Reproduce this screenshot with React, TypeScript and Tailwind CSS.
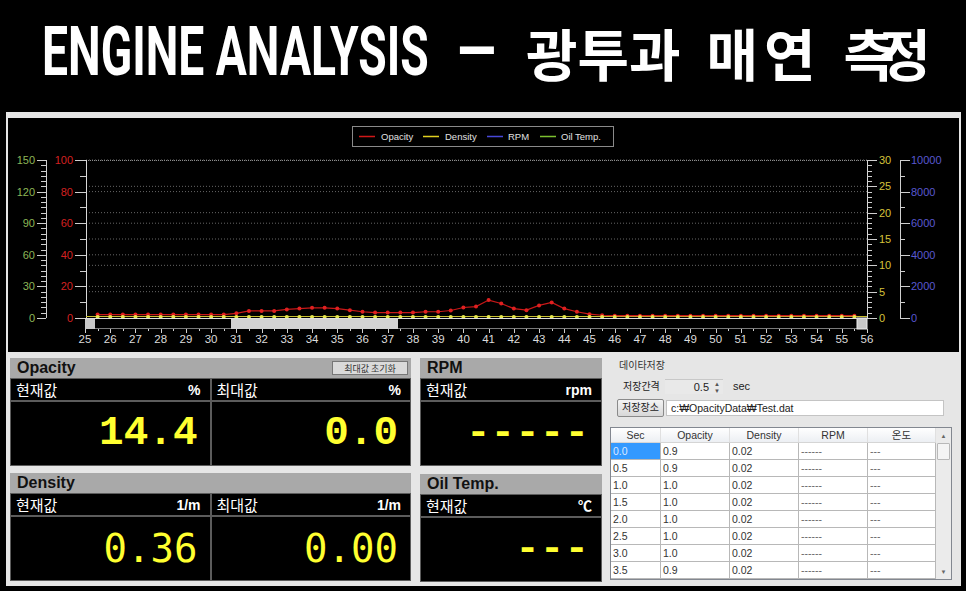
import React from 'react';

const X0 = 85;
const XS = (867 - 85) / 31;
const Y0 = 318;
const YH = 158;
const tx = (t: number) => X0 + (t - 25) * XS;

// opacity samples every 0.5 sec, starting at 25.5
const opacity = [
  1.2, 1.2, 1.2, 1.2, 1.2, 1.2, 1.2, 1.2, 1.2, 1.2, 1.2,
  2, 3.5, 3.5, 3.5, 4.5, 5, 5.5, 5.5, 5, 4, 3, 2.5, 2.5, 2.5, 2.5, 3, 3, 3.8,
  5.7, 6.3, 10.4, 8.2, 5, 4, 7, 8.9, 5, 3, 1.5, 0.8,
  0.5, 0.5, 0.5, 0.5, 0.5, 0.5, 0.5, 0.5, 0.5, 0.5, 0.5, 0.5, 0.5, 0.5, 0.5, 0.5, 0.5, 0.5, 0.5, 0.5,
];

const range = (a: number, b: number, s: number) => {
  const out: number[] = [];
  for (let v = a; v <= b + 1e-9; v += s) out.push(v);
  return out;
};

function Chart() {
  const pts = opacity.map((v, i) => [tx(25.5 + i * 0.5), Y0 - 1.5 - (v / 100) * YH]);
  const line = pts.map((p) => p.join(',')).join(' ');
  const grid = [
    ...range(20, 100, 20).map((v) => Y0 - (v / 100) * YH),
    ...range(5, 25, 5).map((v) => Y0 - (v / 30) * YH),
  ];
  return (
    <svg width={950} height={234} viewBox="8 118 950 234" className="block">
      {/* legend */}
      <rect x={352.5} y={126.5} width={261} height={20} fill="#000" stroke="#8a8a8a" />
      <g fontFamily="Liberation Sans, sans-serif" fontSize={9.5} fill="#e0e0e0">
        <line x1={359} y1={136.5} x2={375} y2={136.5} stroke="#d01818" strokeWidth={1.5} />
        <text x={381} y={140}>Opacity</text>
        <line x1={423} y1={136.5} x2={439} y2={136.5} stroke="#e0d020" strokeWidth={1.5} />
        <text x={445} y={140}>Density</text>
        <line x1={487} y1={136.5} x2={503} y2={136.5} stroke="#4848d8" strokeWidth={1.5} />
        <text x={508} y={140}>RPM</text>
        <line x1={540} y1={136.5} x2={556} y2={136.5} stroke="#7cc030" strokeWidth={1.5} />
        <text x={561} y={140}>Oil Temp.</text>
      </g>

      {/* grid */}
      {grid.map((y, i) => (
        <line key={i} x1={86} y1={y} x2={867} y2={y} stroke="#666" strokeDasharray="1 2" />
      ))}
      <line x1={86} y1={160.5} x2={867} y2={160.5} stroke="#8a8a8a" strokeDasharray="1 1" />

      {/* green axis 0-150 */}
      <line x1={46.5} y1={160} x2={46.5} y2={318} stroke="#cfcfcf" />
      {range(0, 150, 5).map((v) => {
        const y = Math.round(Y0 - (v / 150) * YH) + 0.5;
        return <line key={v} x1={v % 30 === 0 ? 37 : 41} y1={y} x2={46} y2={y} stroke="#cfcfcf" />;
      })}
      {range(0, 150, 30).map((v) => (
        <text key={v} x={35} y={Y0 - (v / 150) * YH + 4} fontSize={11} textAnchor="end" fill="#8db657" fontFamily="Liberation Sans, sans-serif">
          {v}
        </text>
      ))}

      {/* red axis 0-100 */}
      <line x1={86.5} y1={160} x2={86.5} y2={318} stroke="#d8d8d8" />
      {range(0, 100, 10).map((v) => {
        const y = Math.round(Y0 - (v / 100) * YH) + 0.5;
        return <line key={v} x1={v % 20 === 0 ? 75 : 80} y1={y} x2={86} y2={y} stroke="#cfcfcf" />;
      })}
      {range(0, 100, 20).map((v) => (
        <text key={v} x={73} y={Y0 - (v / 100) * YH + 4} fontSize={11} textAnchor="end" fill="#d42020" fontFamily="Liberation Sans, sans-serif">
          {v}
        </text>
      ))}

      {/* yellow axis 0-30 */}
      <line x1={867.5} y1={160} x2={867.5} y2={318} stroke="#d8d8d8" />
      {range(0, 30, 1).map((v) => {
        const y = Math.round(Y0 - (v / 30) * YH) + 0.5;
        return <line key={v} x1={867} y1={y} x2={v % 5 === 0 ? 877 : 872} y2={y} stroke="#cfcfcf" />;
      })}
      {range(0, 30, 5).map((v) => (
        <text key={v} x={879} y={Y0 - (v / 30) * YH + 4} fontSize={11} fill="#d6c23a" fontFamily="Liberation Sans, sans-serif">
          {v}
        </text>
      ))}

      {/* blue axis 0-10000 */}
      <line x1={900.5} y1={160} x2={900.5} y2={318} stroke="#cfcfcf" />
      {range(0, 10000, 1000).map((v) => {
        const y = Math.round(Y0 - (v / 10000) * YH) + 0.5;
        return <line key={v} x1={900} y1={y} x2={v % 2000 === 0 ? 910 : 905} y2={y} stroke="#cfcfcf" />;
      })}
      {range(0, 10000, 2000).map((v) => (
        <text key={v} x={911} y={Y0 - (v / 10000) * YH + 4} fontSize={11} fill="#5858d0" fontFamily="Liberation Sans, sans-serif">
          {v}
        </text>
      ))}

      {/* series */}
      <line x1={86} y1={316.5} x2={867} y2={316.5} stroke="#c8c030" strokeWidth={1.2} />
      <polyline points={line} fill="none" stroke="#c81818" strokeWidth={1.2} />
      {pts.map(([x, y], i) => (
        <circle key={`r${i}`} cx={x} cy={y} r={2} fill="#e02020" />
      ))}
      {pts.map(([x], i) => (
        <circle key={`y${i}`} cx={x} cy={317} r={2} fill="#e6e850" />
      ))}

      {/* scrollbar */}
      <rect x={85.5} y={318.5} width={781} height={10} fill="#000" stroke="#7a7a7a" />
      <rect x={85} y={318} width={10} height={11} fill="#c8c8c8" />
      <rect x={231} y={319} width={167} height={10} fill="#d2d2d2" />
      <rect x={857} y={318} width={10} height={11} fill="#c8c8c8" stroke="#eee" />
      <line x1={85} y1={318.5} x2={867} y2={318.5} stroke="#e0e0e0" />

      {/* x axis */}
      {range(25, 56, 0.5).map((t) => {
        const x = Math.round(tx(t)) + 0.5;
        return <line key={t} x1={x} y1={329} x2={x} y2={Number.isInteger(t) ? 333 : 331} stroke="#cfcfcf" />;
      })}
      {range(25, 56, 1).map((t) => (
        <text key={t} x={tx(t)} y={343} fontSize={11.5} textAnchor="middle" fill="#dcdcdc" fontFamily="Liberation Sans, sans-serif">
          {t}
        </text>
      ))}
    </svg>
  );
}

type Cell = { label: string; unit: string; value: string };

function Panel({
  title,
  cells,
  valueClass,
  button,
}: {
  title: string;
  cells: Cell[];
  valueClass: string;
  button?: boolean;
}) {
  return (
    <div className="w-full">
      <div className="h-[20px] bg-[#a9a9a9] flex items-center justify-between pl-[7px] pr-[3px]">
        <span className="text-[16px] font-bold text-[#111] leading-none">{title}</span>
        {button && (
          <div className="w-[76px] h-[14px] border border-[#777] bg-[#dadada] flex items-center justify-center text-[9px] leading-none text-[#333] font-['Noto_Sans_CJK_KR',sans-serif]">
            최대값 초기화
          </div>
        )}
      </div>
      <div className={`bg-[#5c5c5c] p-px grid gap-[2px] ${cells.length === 2 ? 'grid-cols-2' : 'grid-cols-1'}`}>
        {cells.map((c, i) => (
          <div key={i} className="flex flex-col gap-[2px]">
            <div className="h-[21px] bg-black flex items-center justify-between pl-[5px] pr-[9px] text-white">
              <span className="text-[15px] leading-none font-['Noto_Sans_CJK_KR',sans-serif]">{c.label}</span>
              <span className="text-[14px] font-bold leading-none">{c.unit}</span>
            </div>
            <div className="h-[63px] bg-black flex items-center justify-end pr-[12px]">
              <span className={valueClass}>{c.value}</span>
            </div>
          </div>
        ))}
      </div>
    </div>
  );
}

const rows = [
  ['0.0', '0.9'],
  ['0.5', '0.9'],
  ['1.0', '1.0'],
  ['1.5', '1.0'],
  ['2.0', '1.0'],
  ['2.5', '1.0'],
  ['3.0', '1.0'],
  ['3.5', '0.9'],
];

function DataSection() {
  return (
    <div className="w-[346px] flex flex-col text-[#222] font-['Liberation_Sans','Noto_Sans_CJK_KR',sans-serif]">
      <div className="mt-[9px] ml-[9px] text-[10px] leading-none text-[#333]">데이타저장</div>
      <div className="mt-[8px] flex items-center h-[15px]">
        <span className="ml-[13px] w-[42px] text-[10px] leading-none">저장간격</span>
        <div className="w-[58px] h-[15px] bg-[#e9e9e9] border-t border-[#c8c8c8] flex items-center justify-end pr-[2px]">
          <span className="text-[11px] leading-none mr-[4px]">0.5</span>
          <div className="w-[8px] h-[13px] flex flex-col items-center justify-between text-[6px] leading-none text-[#555]">
            <span>▲</span>
            <span>▼</span>
          </div>
        </div>
        <span className="ml-[10px] text-[11px] leading-none">sec</span>
      </div>
      <div className="mt-[5px] flex items-center h-[18px]">
        <div className="ml-[7px] w-[47px] h-[18px] border border-[#8a8a8a] rounded-[2px] bg-gradient-to-b from-[#f4f4f4] to-[#d8d8d8] flex items-center justify-center text-[10px] leading-none">
          저장장소
        </div>
        <div className="ml-[2px] w-[278px] h-[16px] bg-white border border-[#c4c4c4] flex items-center pl-[4px] text-[10.5px] leading-none">
          c:₩OpacityData₩Test.dat
        </div>
      </div>
      <div className="mt-[10px] w-[342px] h-[153px] border border-[#828790] bg-white flex">
        <div className="flex flex-col">
          <div className="h-[15px] grid grid-cols-[50px_69px_69px_69px_68px] bg-gradient-to-b from-white to-[#eceff3] border-b border-[#d5d5d5] text-[10.5px] leading-none text-[#333]">
            {['Sec', 'Opacity', 'Density', 'RPM', '온도'].map((h) => (
              <div key={h} className="flex items-center justify-center border-r border-[#e0e0e0]">
                {h}
              </div>
            ))}
          </div>
          {rows.map(([s, o], i) => (
            <div key={s} className="h-[17px] grid grid-cols-[50px_69px_69px_69px_68px] text-[10.5px] leading-none text-[#333]">
              {[s, o, '0.02', '------', '---'].map((v, j) => (
                <div
                  key={j}
                  className={`flex items-center pl-[2px] border-r border-b border-[#b8b8b8] ${
                    i === 0 && j === 0 ? 'bg-[#3399ff] text-[#dde8ff]' : ''
                  } ${j >= 3 ? 'text-[#666]' : ''}`}
                >
                  {v}
                </div>
              ))}
            </div>
          ))}
        </div>
        <div className="w-[15px] bg-[#ebebeb] flex flex-col items-center text-[6px] leading-none text-[#666]">
          <div className="h-[15px] flex items-center">▲</div>
          <div className="w-[13px] h-[17px] bg-[#f4f4f4] border border-[#b8b8b8] rounded-[1px]" />
          <div className="flex-1" />
          <div className="h-[14px] flex items-center">▼</div>
        </div>
      </div>
    </div>
  );
}

export default function App() {
  const bigBold = "text-[41px] leading-none font-bold text-[#ffff30] font-['Liberation_Mono',monospace]";
  const bigThin = "text-[39px] leading-none text-[#ffff30] font-['DejaVu_Sans_Mono',monospace]";
  const kr = "text-[56px] font-bold leading-none font-['Noto_Sans_CJK_KR',sans-serif]";
  return (
    <div className="w-[966px] h-[591px] bg-black overflow-hidden font-['Liberation_Sans','Noto_Sans_CJK_KR',sans-serif]">
      {/* title */}
      <div className="h-[112px] flex items-center pl-[42px] pb-[9px] text-white">
        <div className="w-[383px] h-[60px] flex items-center">
          <span className="origin-left scale-x-[0.68] whitespace-nowrap text-[68px] font-bold leading-none font-['Roboto',sans-serif]">
            ENGINE ANALYSIS
          </span>
        </div>
        <span className="ml-[30px] w-[36px] text-[67px] font-bold leading-none font-['Roboto',sans-serif]">–</span>
        <span className={`ml-[35px] ${kr}`}>광투과</span>
        <span className={`ml-[26px] ${kr} tracking-[6px]`}>매연</span>
        <span className={`ml-[22px] ${kr} tracking-[-16px]`}>측정</span>
      </div>

      {/* window */}
      <div className="ml-[6px] w-[955px] h-[474px] bg-[#e6e6e6] pt-[6px] px-[2px]">
        <div className="h-[234px] bg-black">
          <Chart />
        </div>
        <div className="h-[234px] flex pl-[2px] pt-[6px]">
          <div className="w-[401px] flex flex-col gap-[7px]">
            <Panel
              title="Opacity"
              button
              valueClass={bigBold}
              cells={[
                { label: '현재값', unit: '%', value: '14.4' },
                { label: '최대값', unit: '%', value: '0.0' },
              ]}
            />
            <Panel
              title="Density"
              valueClass={bigThin}
              cells={[
                { label: '현재값', unit: '1/m', value: '0.36' },
                { label: '최대값', unit: '1/m', value: '0.00' },
              ]}
            />
          </div>
          <div className="ml-[9px] w-[182px] flex flex-col gap-[8px]">
            <Panel title="RPM" valueClass={bigBold} cells={[{ label: '현재값', unit: 'rpm', value: '-----' }]} />
            <Panel title="Oil Temp." valueClass={bigBold} cells={[{ label: '현재값', unit: '℃', value: '---' }]} />
          </div>
          <div className="ml-[8px] -mt-[6px]">
            <DataSection />
          </div>
        </div>
      </div>
    </div>
  );
}
